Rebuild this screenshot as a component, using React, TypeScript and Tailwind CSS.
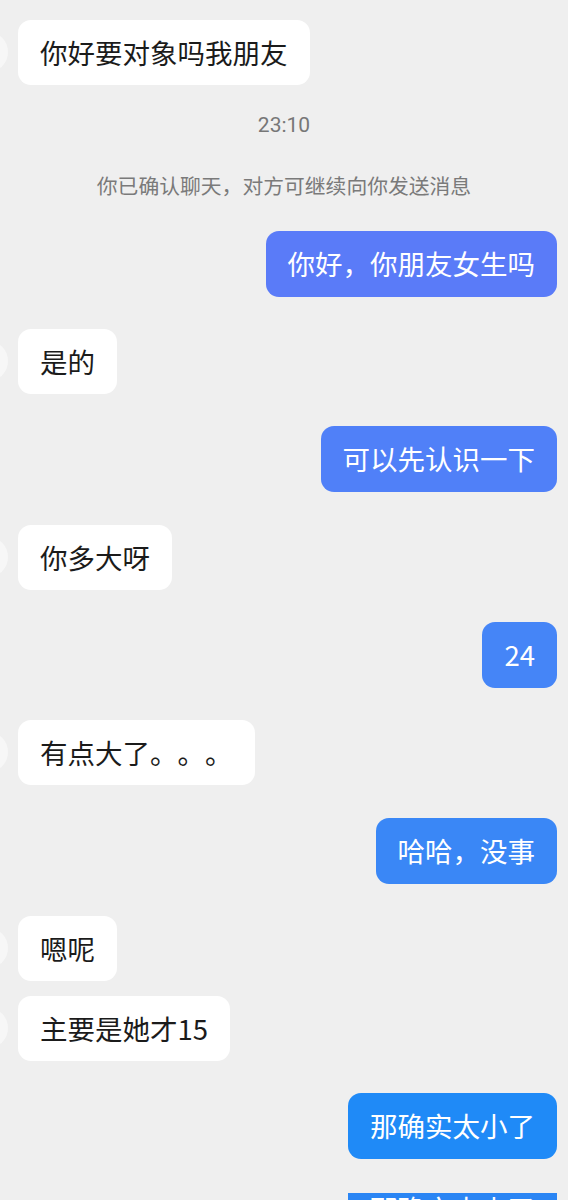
import React from "react";

const font = { fontFamily: '"Noto Sans CJK SC", "Noto Sans", sans-serif' };

function Left({ text, mt }: { text: string; mt: string }) {
  return (
    <div className={`flex items-start ${mt}`}>
      <div className="w-[40px] h-[40px] rounded-full bg-[#f7f7f7] ml-[-32px] mt-[12px] shrink-0" />
      <div className="ml-[10px] bg-white rounded-[13px] px-[22px] h-[65px] flex items-center text-[27.5px] text-[#1b1b1b] leading-none [text-spacing-trim:space-all]">
        {text}
      </div>
    </div>
  );
}

function Right({ text, mt, bg }: { text: string; mt: string; bg: string }) {
  return (
    <div className={`flex justify-end pr-[11px] ${mt}`}>
      <div className={`${bg} rounded-[13px] px-[22px] h-[66px] flex items-center text-[27.5px] text-white leading-none [text-spacing-trim:space-all]`}>
        {text}
      </div>
    </div>
  );
}

export default function App() {
  return (
    <div className="w-[568px] h-[1200px] overflow-hidden bg-[#efefef]" style={font}>
      <div className="flex flex-col pt-[20px]">
        <Left text="你好要对象吗我朋友" mt="mt-0" />
        <div
          className="mt-[30px] h-[20px] leading-[20px] text-center text-[21px] text-[#777777]"
          style={{ fontFamily: 'Roboto, "Noto Sans", sans-serif' }}
        >
          23:10
        </div>
        <div className="mt-[40px] h-[20px] leading-[20px] text-center text-[20.8px] text-[#7a7a7a] [text-spacing-trim:space-all]">
          你已确认聊天，对方可继续向你发送消息
        </div>
        <Right text="你好，你朋友女生吗" mt="mt-[36px]" bg="bg-[#5a7bf8]" />
        <Left text="是的" mt="mt-[32px]" />
        <Right text="可以先认识一下" mt="mt-[32px]" bg="bg-[#5080f8]" />
        <Left text="你多大呀" mt="mt-[33px]" />
        <Right text="24" mt="mt-[32px]" bg="bg-[#4585f7]" />
        <Left text="有点大了。。。" mt="mt-[32px]" />
        <Right text="哈哈，没事" mt="mt-[33px]" bg="bg-[#3a87f6]" />
        <Left text="嗯呢" mt="mt-[32px]" />
        <Left text="主要是她才15" mt="mt-[15px]" />
        <Right text="那确实太小了" mt="mt-[32px]" bg="bg-[#1f8af7]" />
        <div className="flex justify-end pr-[11px] mt-[34px]">
          <div className="bg-[#2a85f4] px-[22px] pt-[2px] h-[40px] text-[27.5px] text-white leading-none">
            那确实太小了
          </div>
        </div>
      </div>
    </div>
  );
}
